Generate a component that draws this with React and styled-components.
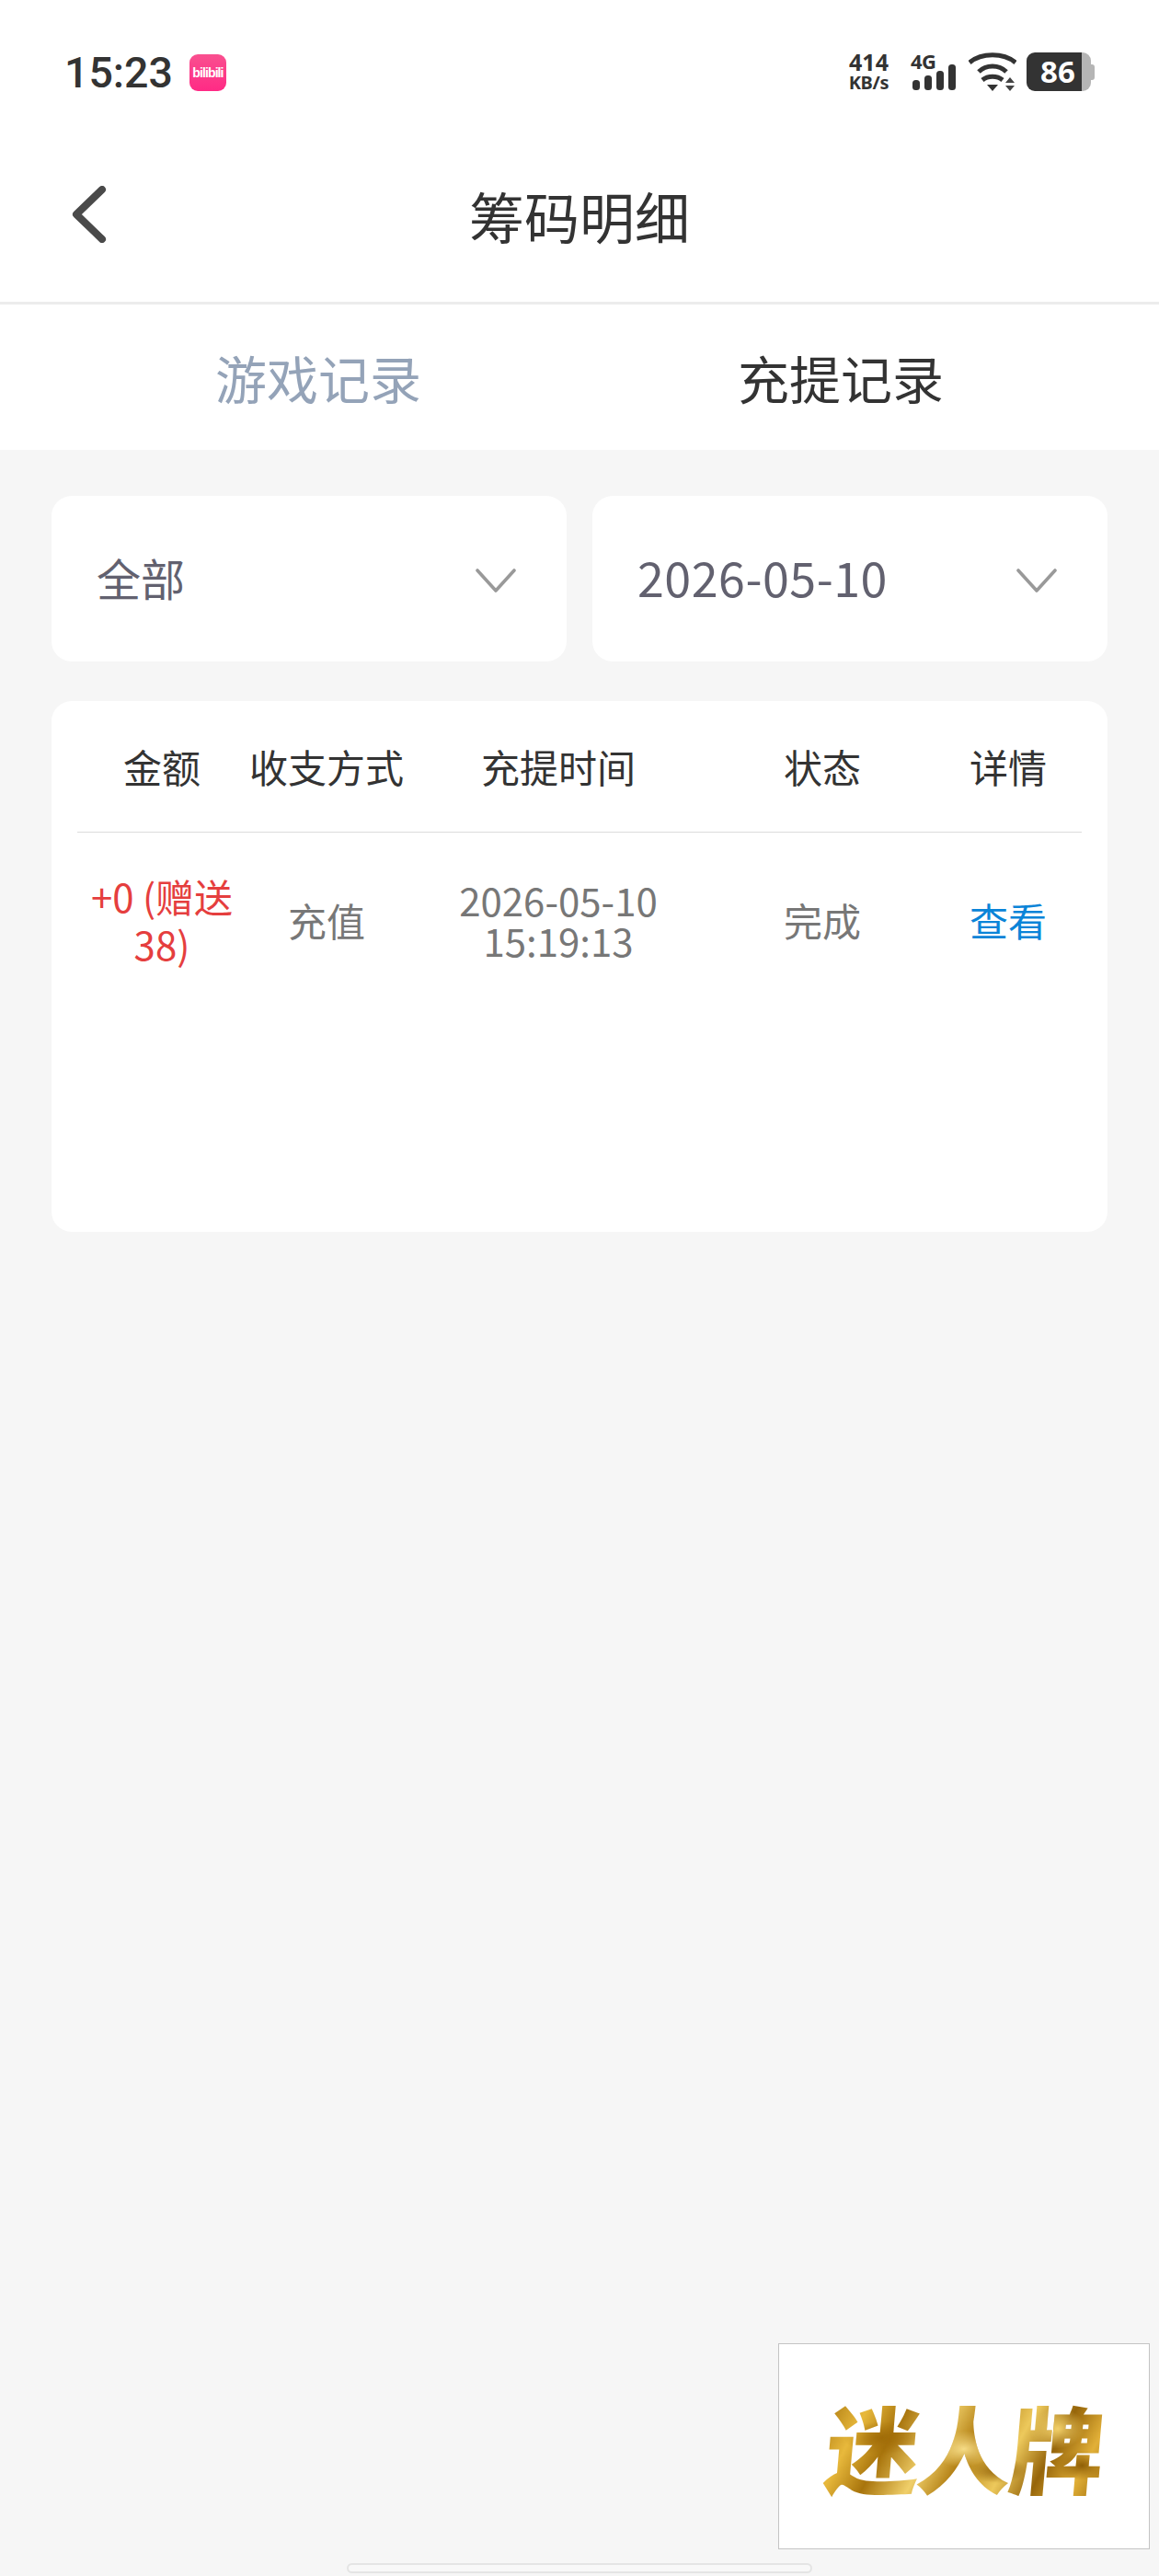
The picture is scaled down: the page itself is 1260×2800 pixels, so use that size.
import React from "react";
import styled, { createGlobalStyle } from "styled-components";

const Global = createGlobalStyle`
  html, body { margin: 0; padding: 0; background: #f6f6f6; }
  * { box-sizing: border-box; }
`;
const FONT = `"Noto Sans CJK SC", "Noto Sans", sans-serif`;

const Page = styled.div`
  position: relative;
  width: 1260px;
  height: 2800px;
  overflow: hidden;
  background: #f6f6f6;
  font-family: ${FONT};
`;
const Header = styled.header`
  background: #fff;
  border-bottom: 3px solid #ececec;
`;
const StatusBar = styled.div`
  height: 140px;
  padding: 0 70px;
  display: flex;
  align-items: flex-start;
  justify-content: space-between;
`;
const StatusLeft = styled.div`
  display: flex;
  align-items: center;
  gap: 18px;
  height: 40px;
  margin-top: 59px;
`;
const Clock = styled.span`
  font-family: Roboto, sans-serif;
  font-size: 46.5px;
  font-weight: 500;
  line-height: 40px;
  color: #333;
`;
const AppBadge = styled.span`
  position: relative;
  width: 40px;
  height: 40px;
  border-radius: 9px;
  background: linear-gradient(180deg, #f9508f 0%, #ff2a85 100%);
  color: #fff;
  display: flex;
  align-items: center;
  justify-content: center;
  font-family: "Liberation Sans", sans-serif;
  font-weight: 700;
  font-size: 14px;
  letter-spacing: -0.9px;
`;
const StatusRight = styled.div`
  display: flex;
  align-items: flex-start;
  height: 42px;
  margin-top: 57px;
`;
const Speed = styled.div`
  display: flex;
  flex-direction: column;
  align-items: center;
  gap: 2px;
  width: 49px;
  margin-right: 21px;
  color: #333;
  font-family: "Noto Sans", sans-serif;
  font-weight: 700;
`;
const SpeedValue = styled.span`
  font-size: 25px;
  line-height: 21px;
`;
const SpeedUnit = styled.span`
  font-size: 20px;
  line-height: 19px;
  letter-spacing: -0.3px;
`;
const Signal = styled.div`
  position: relative;
  width: 49px;
  height: 42px;
  margin-right: 14px;
`;
const SignalLabel = styled.span`
  position: absolute;
  left: 0;
  top: 0;
  font-family: "Noto Sans", sans-serif;
  font-weight: 700;
  font-size: 22px;
  line-height: 18px;
  letter-spacing: -0.5px;
  color: #333;
`;
const Wifi = styled.svg`
  display: block;
  margin-right: 11px;
`;
const Battery = styled.div`
  position: relative;
  width: 70px;
  height: 42px;
  margin-right: 4px;
  border-radius: 9px;
  background: linear-gradient(90deg, #333 0 86%, #b5b5b5 86% 100%);
  color: #fff;
  font-family: "Noto Sans", sans-serif;
  font-weight: 700;
  font-size: 33px;
  line-height: 42px;
  padding-left: 15px;
  &::after {
    content: "";
    position: absolute;
    right: -4px;
    top: 13px;
    width: 4px;
    height: 17px;
    border-radius: 0 3px 3px 0;
    background: #b5b5b5;
  }
`;
const TitleBar = styled.div`
  position: relative;
  height: 188px;
  display: flex;
  align-items: center;
  justify-content: center;
`;
const Back = styled.svg`
  position: absolute;
  left: 76px;
  top: 62px;
`;
const Title = styled.h1`
  margin: 0;
  font-size: 60px;
  font-weight: 400;
  color: #333;
  line-height: 1;
`;
const Tabs = styled.nav`
  height: 158px;
  padding: 0 62px;
  background: #fff;
  display: grid;
  grid-template-columns: 1fr 1fr;
  align-items: center;
`;
const Tab = styled.div`
  text-align: center;
  font-size: 56px;
  line-height: 1;
  color: ${(p) => (p.$active ? "#333" : "#94a3b8")};
`;
const Content = styled.main`
  padding: 50px 56px 0;
`;
const Filters = styled.div`
  display: grid;
  grid-template-columns: 1fr 1fr;
  gap: 28px;
`;
const Select = styled.div`
  height: 180px;
  background: #fff;
  border-radius: 22px;
  display: flex;
  align-items: center;
  justify-content: space-between;
  padding: 0 55px 4px 49px;
  color: #62616f;
  font-size: 48px;
  svg {
    margin-top: 7px;
  }
`;
const DateValue = styled.span`
  font-size: 52px;
  letter-spacing: 0.5px;
  margin-top: -2px;
`;
const Card = styled.section`
  margin-top: 43px;
  height: 577px;
  padding: 0 28px;
  background: #fff;
  border-radius: 22px;
`;
const Row = styled.div`
  display: grid;
  grid-template-columns: 184px 174px 330px 244px 160px;
  align-items: center;
  text-align: center;
  font-size: 42px;
  line-height: 44px;
  height: ${(p) => (p.$head ? "143px" : "190px")};
  color: ${(p) => (p.$head ? "#333" : "#777")};
  ${(p) => p.$head && "border-bottom: 1px solid #dcdcdc;"}
`;
const Amount = styled.div`
  color: #e53e3e;
  line-height: 52px;
`;
const Link = styled.div`
  color: #0a84d8;
`;
const Logo = styled.div`
  position: absolute;
  left: 846px;
  top: 2547px;
  width: 404px;
  height: 224px;
  background: #fff;
  border: 1px solid #c4c4c4;
  display: flex;
  align-items: center;
  justify-content: center;
`;
const LogoText = styled.span`
  display: inline-block;
  transform: skewX(-5deg);
  font-size: 103px;
  line-height: 1.15;
  font-weight: 900;
  letter-spacing: -3px;
  background:
    radial-gradient(ellipse 40px 18px at 60px 50px, #a06c08 0%, transparent 100%),
    radial-gradient(ellipse 34px 20px at 150px 62px, #f6dc86 0%, transparent 100%),
    radial-gradient(ellipse 30px 14px at 190px 85px, #8f5f06 0%, transparent 100%),
    radial-gradient(ellipse 30px 22px at 250px 40px, #f2d06a 0%, transparent 100%),
    radial-gradient(ellipse 26px 16px at 280px 80px, #8f5f06 0%, transparent 100%),
    linear-gradient(115deg, #a9760e 0%, #e8b93c 14%, #a8740c 26%, #f0cf6a 40%, #b07c10 52%, #edc95c 66%, #96650a 78%, #e2b038 90%, #a5730f 100%);
  -webkit-background-clip: text;
  background-clip: text;
  color: transparent;
`;
const HomeBar = styled.div`
  position: absolute;
  left: 377px;
  top: 2786px;
  width: 506px;
  height: 11px;
  border-radius: 6px;
  background: #f8f8f8;
  border: 2px solid #e4e4e4;
`;
const Chevron = () => (
  <svg width="44" height="26" viewBox="0 0 44 26" fill="none">
    <path d="M2 2 L22 24 L42 2" stroke="#999" strokeWidth="3.6" strokeLinecap="round" strokeLinejoin="round" />
  </svg>
);

export default function App() {
  return (
    <Page>
      <Global />
      <Header>
        <StatusBar>
          <StatusLeft>
            <Clock>15:23</Clock>
            <AppBadge>bilibili</AppBadge>
          </StatusLeft>
          <StatusRight>
            <Speed>
              <SpeedValue>414</SpeedValue>
              <SpeedUnit>KB/s</SpeedUnit>
            </Speed>
            <Signal>
              <SignalLabel>4G</SignalLabel>
              <svg width="49" height="42" viewBox="0 0 49 42">
                <rect x="2" y="30" width="8" height="11" rx="3.5" fill="#333" />
                <rect x="15" y="25" width="8" height="16" rx="3.5" fill="#333" />
                <rect x="28" y="20" width="8" height="21" rx="3.5" fill="#333" />
                <rect x="41" y="13" width="8" height="28" rx="3.5" fill="#333" />
              </svg>
            </Signal>
            <Wifi width="52" height="42" viewBox="0 0 52 42" fill="none">
              <path d="M1 11 C14 0 38 0 51 11" stroke="#333" strokeWidth="5" />
              <path d="M11 21 C19 13 33 13 41 21" stroke="#333" strokeWidth="5" />
              <path d="M15 30 C21 25 31 25 37 30" stroke="#333" strokeWidth="5" />
              <path d="M20 35 H32 L26 42 Z" fill="#333" />
              <path d="M40 33 L45 27 L50 33 Z M40 36 H50 L45 42 Z" fill="#444" />
            </Wifi>
            <Battery>86</Battery>
          </StatusRight>
        </StatusBar>
        <TitleBar>
          <Back width="42" height="62" viewBox="0 0 42 62" fill="none">
            <path d="M35 4 L7 31 L35 58" stroke="#4a4a4a" strokeWidth="8" strokeLinecap="round" strokeLinejoin="round" />
          </Back>
          <Title>筹码明细</Title>
        </TitleBar>
      </Header>
      <Tabs>
        <Tab>游戏记录</Tab>
        <Tab $active>充提记录</Tab>
      </Tabs>
      <Content>
        <Filters>
          <Select>
            全部
            <Chevron />
          </Select>
          <Select>
            <DateValue>2026-05-10</DateValue>
            <Chevron />
          </Select>
        </Filters>
        <Card>
          <Row $head>
            <div>金额</div>
            <div>收支方式</div>
            <div>充提时间</div>
            <div>状态</div>
            <div>详情</div>
          </Row>
          <Row>
            <Amount>+0 (赠送38)</Amount>
            <div>充值</div>
            <div>2026-05-10 15:19:13</div>
            <div>完成</div>
            <Link>查看</Link>
          </Row>
        </Card>
      </Content>
      <Logo>
        <LogoText>迷人牌</LogoText>
      </Logo>
      <HomeBar />
    </Page>
  );
}
